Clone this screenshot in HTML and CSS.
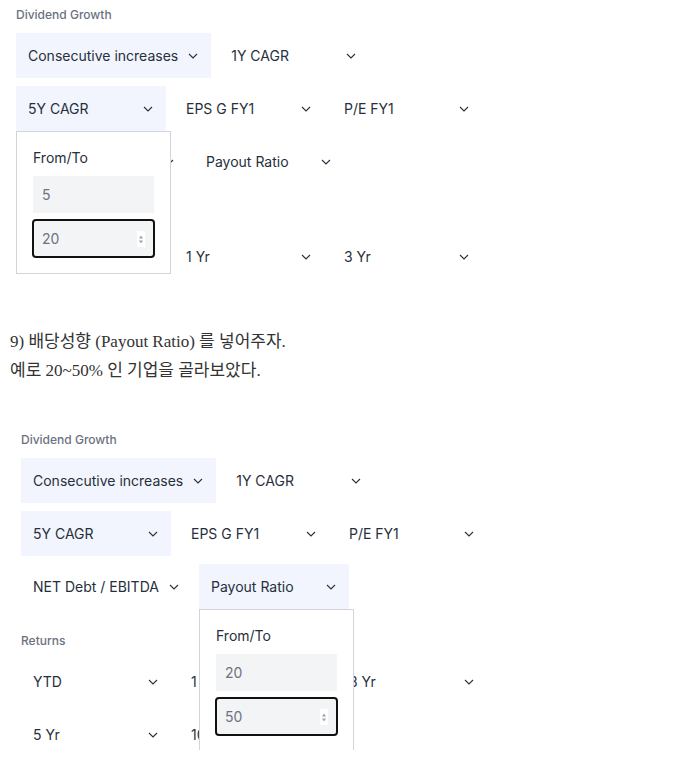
FILE: index.html
```html
<!DOCTYPE html>
<html lang="ko">
<head>
    <meta charset="UTF-8">
    <meta name="viewport" content="width=device-width, initial-scale=1.0">
    <title>배당성향 필터</title>
    <link rel="stylesheet" href="styles.css">
</head>
<body>
    <!-- screenshot 1: 5Y CAGR open -->
    <div class="shot shot-first">
        <div class="screener">
            <div class="group">
                <div class="group-label">Dividend Growth</div>
                <div class="row">
                    <div class="item active"><span>Consecutive increases</span><svg class="chev" viewBox="0 0 10 6"><polyline points="1,1 5,5 9,1"/></svg></div>
                    <div class="item"><span>1Y CAGR</span><svg class="chev" viewBox="0 0 10 6"><polyline points="1,1 5,5 9,1"/></svg></div>
                </div>
                <div class="row">
                    <div class="item active">
                        <span>5Y CAGR</span><svg class="chev" viewBox="0 0 10 6"><polyline points="1,1 5,5 9,1"/></svg>
                        <div class="popover">
                            <div class="pop-title">From/To</div>
                            <div class="field"><span>5</span></div>
                            <div class="field focus"><span>20</span><svg class="spin" viewBox="0 0 8 16"><polygon points="4,4.5 2,7.5 6,7.5"/><polygon points="2,9.5 6,9.5 4,12.5"/></svg></div>
                        </div>
                    </div>
                    <div class="item"><span>EPS G FY1</span><svg class="chev" viewBox="0 0 10 6"><polyline points="1,1 5,5 9,1"/></svg></div>
                    <div class="item"><span>P/E FY1</span><svg class="chev" viewBox="0 0 10 6"><polyline points="1,1 5,5 9,1"/></svg></div>
                </div>
                <div class="row">
                    <div class="item wide"><span>NET Debt / EBITDA</span><svg class="chev" viewBox="0 0 10 6"><polyline points="1,1 5,5 9,1"/></svg></div>
                    <div class="item"><span>Payout Ratio</span><svg class="chev" viewBox="0 0 10 6"><polyline points="1,1 5,5 9,1"/></svg></div>
                </div>
            </div>
            <div class="group">
                <div class="group-label">Returns</div>
                <div class="row">
                    <div class="item"><span>YTD</span><svg class="chev" viewBox="0 0 10 6"><polyline points="1,1 5,5 9,1"/></svg></div>
                    <div class="item"><span>1 Yr</span><svg class="chev" viewBox="0 0 10 6"><polyline points="1,1 5,5 9,1"/></svg></div>
                    <div class="item"><span>3 Yr</span><svg class="chev" viewBox="0 0 10 6"><polyline points="1,1 5,5 9,1"/></svg></div>
                </div>
            </div>
        </div>
    </div>

    <p class="note">9) 배당성향 (Payout Ratio) 를 넣어주자.<br>예로 20~50% 인 기업을 골라보았다.</p>

    <!-- screenshot 2: Payout Ratio open -->
    <div class="shot shot-second">
        <div class="screener">
            <div class="group">
                <div class="group-label">Dividend Growth</div>
                <div class="row">
                    <div class="item active"><span>Consecutive increases</span><svg class="chev" viewBox="0 0 10 6"><polyline points="1,1 5,5 9,1"/></svg></div>
                    <div class="item"><span>1Y CAGR</span><svg class="chev" viewBox="0 0 10 6"><polyline points="1,1 5,5 9,1"/></svg></div>
                </div>
                <div class="row">
                    <div class="item active"><span>5Y CAGR</span><svg class="chev" viewBox="0 0 10 6"><polyline points="1,1 5,5 9,1"/></svg></div>
                    <div class="item"><span>EPS G FY1</span><svg class="chev" viewBox="0 0 10 6"><polyline points="1,1 5,5 9,1"/></svg></div>
                    <div class="item"><span>P/E FY1</span><svg class="chev" viewBox="0 0 10 6"><polyline points="1,1 5,5 9,1"/></svg></div>
                </div>
                <div class="row">
                    <div class="item wide"><span>NET Debt / EBITDA</span><svg class="chev" viewBox="0 0 10 6"><polyline points="1,1 5,5 9,1"/></svg></div>
                    <div class="item active">
                        <span>Payout Ratio</span><svg class="chev" viewBox="0 0 10 6"><polyline points="1,1 5,5 9,1"/></svg>
                        <div class="popover">
                            <div class="pop-title">From/To</div>
                            <div class="field"><span>20</span></div>
                            <div class="field focus"><span>50</span><svg class="spin" viewBox="0 0 8 16"><polygon points="4,4.5 2,7.5 6,7.5"/><polygon points="2,9.5 6,9.5 4,12.5"/></svg></div>
                        </div>
                    </div>
                </div>
            </div>
            <div class="group">
                <div class="group-label">Returns</div>
                <div class="row">
                    <div class="item"><span>YTD</span><svg class="chev" viewBox="0 0 10 6"><polyline points="1,1 5,5 9,1"/></svg></div>
                    <div class="item"><span>1 Yr</span><svg class="chev" viewBox="0 0 10 6"><polyline points="1,1 5,5 9,1"/></svg></div>
                    <div class="item"><span>3 Yr</span><svg class="chev" viewBox="0 0 10 6"><polyline points="1,1 5,5 9,1"/></svg></div>
                </div>
                <div class="row">
                    <div class="item"><span>5 Yr</span><svg class="chev" viewBox="0 0 10 6"><polyline points="1,1 5,5 9,1"/></svg></div>
                    <div class="item"><span>10 Yr</span><svg class="chev" viewBox="0 0 10 6"><polyline points="1,1 5,5 9,1"/></svg></div>
                </div>
            </div>
        </div>
    </div>
</body>
</html>
```

FILE: styles.css
```css
body {
    margin: 0;
    background: #fff;
}
.shot {
    overflow: hidden;
}
.shot-first {
    height: 286px;
}
.shot-second {
    height: 325px;
    margin-left: 5px;
}
.screener {
    padding: 7px 16px 0;
    font-family: Inter, "Noto Sans", sans-serif;
}
.group {
    margin-bottom: 24px;
}
.group-label {
    font-size: 12px;
    line-height: 16px;
    font-weight: 500;
    color: #6b7280;
    margin-bottom: 10px;
}
.row {
    display: flex;
    gap: 8px;
    margin-bottom: 8px;
}
.item {
    position: relative;
    display: flex;
    align-items: center;
    justify-content: space-between;
    gap: 10px;
    box-sizing: border-box;
    min-width: 150px;
    height: 45px;
    padding: 0 13px 0 12px;
    font-size: 14px;
    color: #272f3c;
    white-space: nowrap;
}
.item.wide {
    width: 170px;
}
.item.active {
    background: #f2f5fd;
}
.chev {
    width: 10px;
    height: 6px;
    flex-shrink: 0;
    fill: none;
    stroke: #272f3c;
    stroke-width: 1.1;
}
.popover {
    position: absolute;
    top: 100%;
    left: 0;
    z-index: 2;
    width: 155px;
    box-sizing: border-box;
    padding: 16px;
    background: #fff;
    border: 1px solid #d1d5db;
}
.pop-title {
    font-size: 14px;
    line-height: 20px;
    color: #272f3c;
    margin-bottom: 8px;
}
.field {
    display: flex;
    align-items: center;
    justify-content: space-between;
    box-sizing: border-box;
    width: 121px;
    height: 37px;
    padding: 0 9px;
    background: #f3f4f6;
    font-size: 14px;
    color: #6b7280;
}
.field + .field {
    margin-top: 7px;
}
.field.focus {
    outline: 2px solid #111;
    outline-offset: -1px;
    border-radius: 3px;
}
.spin {
    width: 8px;
    height: 16px;
    background: #fff;
    fill: #9ca3af;
}
.note {
    margin: 41px 0 40px 10px;
    font-family: "Liberation Serif", "Noto Sans CJK KR", serif;
    font-size: 17px;
    line-height: 29px;
    color: #333;
}
```
